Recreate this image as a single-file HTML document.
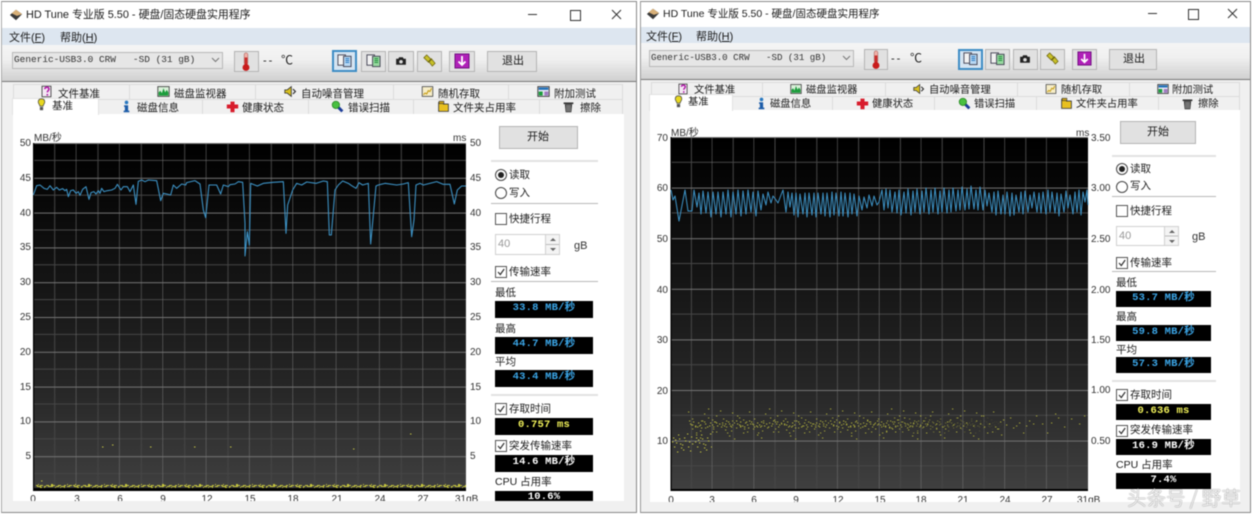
<!DOCTYPE html>
<html lang="zh"><head><meta charset="utf-8"><title>HD Tune</title>
<style>
html,body{margin:0;padding:0;background:#fff;width:1254px;height:514px;overflow:hidden}
#r{position:absolute;left:0;top:0;width:1254px;height:514px;overflow:hidden;filter:blur(.4px);font-family:"Liberation Sans","Noto Sans CJK SC",sans-serif;color:#1c1c1c;font-size:10.5px}
#r div,#r span.t,#r svg.i{position:absolute}
.t{position:absolute;white-space:nowrap;line-height:14px;height:14px}
.a{font-size:10px;color:#333;text-align:right;width:20px;margin-top:1px}
.a2{font-size:10px;color:#333;text-align:left;width:30px;margin:1px 0 0 1px}
.x{font-size:10px;color:#333;text-align:center;width:24px;margin-top:2px}
.btn{background:#e1e1e1;border:1px solid #b4b4b4;box-sizing:border-box}
.sel{background:#d5e4f2;border:2px solid #3d8cc4;box-sizing:border-box}
.box{background:#000;text-align:center;font:bold 10.500px/15px "Liberation Mono","Noto Sans CJK SC",monospace;letter-spacing:.2px;white-space:nowrap;overflow:hidden}
.sep{height:1px;background:#b8b8b8}
.sp{background:#e2e2e2;height:2px}
.rd{width:10px;height:10px;border:1px solid #444;border-radius:50%;background:#fff}
.rd.on:after{content:"";position:absolute;left:2px;top:2px;width:6px;height:6px;border-radius:50%;background:#222}
.cb{width:10px;height:10px;border:1px solid #555;background:#fff}
.cb svg{position:absolute;left:0;top:0;width:10px;height:10px}
.tb{background:#f0f0f0;border-top:1px solid #dcdcdc;border-right:1px solid #dcdcdc;box-sizing:border-box}
.cm{font-family:"Liberation Mono",monospace;color:#333;white-space:pre}
u{text-decoration:underline}
</style></head><body>
<div id="r">
<svg width="0" height="0" style="position:absolute">
<defs>
<symbol id="app" viewBox="0 0 16 16"><path d="M8 2 15 7 8 14 1 8Z" fill="#3a3a3a"/><path d="M8 2 15 7 9 9 3 6Z" fill="#d8b078"/></symbol>
<symbol id="fb" viewBox="0 0 16 16"><rect x="2.5" y="1.5" width="11" height="13" fill="#f4e8f4" stroke="#333"/><path d="M6 5c0-3 5-3 5 0 0 2-2 2-2 4M9 11v2" fill="none" stroke="#b01ca8" stroke-width="2"/></symbol>
<symbol id="mon" viewBox="0 0 16 16"><rect x="1" y="2" width="14" height="12" fill="#d8f0d8" stroke="#333"/><path d="M2 13V9l2-2 2 3 2-6 2 5 2-3 2 3v4Z" fill="#1c9c3c"/></symbol>
<symbol id="spk" viewBox="0 0 16 16"><path d="M1 6h3l5-4v12l-5-4H1Z" fill="#d8c020" stroke="#333"/><path d="M11 5l3 3-3 3" fill="none" stroke="#333" stroke-width="1.5"/></symbol>
<symbol id="rnd" viewBox="0 0 16 16"><rect x="1.5" y="2" width="13" height="12" fill="#f6edc8" stroke="#444"/><path d="M3 12l2-2 2 1 2-4 2 1 2-4" fill="none" stroke="#c8a020" stroke-width="1.4"/></symbol>
<symbol id="ext" viewBox="0 0 16 16"><rect x="1" y="2" width="14" height="12" fill="#e8e8f4" stroke="#222"/><rect x="2" y="3" width="12" height="3" fill="#2070b8"/><rect x="2" y="8" width="5" height="5" fill="#1c9c3c"/><rect x="9" y="8" width="5" height="5" fill="#a07cc0"/></symbol>
<symbol id="blb" viewBox="0 0 16 16"><path d="M8 1c-3 0-4 2-4 4 0 2 2 3 2 5h4c0-2 2-3 2-5 0-2-1-4-4-4Z" fill="#e8d820" stroke="#554"/><rect x="6" y="11" width="4" height="4" fill="#555"/></symbol>
<symbol id="inf" viewBox="0 0 16 16"><circle cx="8" cy="3" r="2.2" fill="#2878c0"/><path d="M5 6.500h5v6.500h1.500v2h-7v-2H6v-4.500H5Z" fill="#1c5ca8"/></symbol>
<symbol id="crs" viewBox="0 0 16 16"><path d="M5.500 2h5v3.500H15v5h-4.500V15h-5v-4.500H1v-5h4.500Z" fill="#d81c2c"/></symbol>
<symbol id="mag" viewBox="0 0 16 16"><path d="M9 9l5 5" stroke="#1c3c98" stroke-width="3.500"/><circle cx="6" cy="6" r="4.500" fill="#48c040" stroke="#2c8828"/></symbol>
<symbol id="fld" viewBox="0 0 16 16"><path d="M2 3h5l1 2h6v9H2Z" fill="#e8c020" stroke="#333"/><rect x="2.500" y="1.500" width="6" height="3" fill="#c8a018" stroke="#333" stroke-width=".7"/></symbol>
<symbol id="trs" viewBox="0 0 16 16"><path d="M2 3h12v2H2Z" fill="#333"/><path d="M3.500 5h9l-1 10h-7Z" fill="#3a3a3a"/><path d="M6 6v8M8 6v8M10 6v8" stroke="#aaa"/></symbol>
<symbol id="th" viewBox="0 0 16 22"><rect x="6" y="1" width="4" height="13" rx="2" fill="#f0b0a8" stroke="#a86058" stroke-width=".6"/><rect x="6.500" y="6" width="3" height="9" fill="#c82828"/><circle cx="8" cy="17" r="3.800" fill="#c81c1c"/></symbol>
<symbol id="d1" viewBox="0 0 16 16"><rect x="1" y="2" width="8" height="11" fill="#f2f2f2" stroke="#445"/><rect x="7" y="3.500" width="8" height="11" fill="#b8d8f4" stroke="#445"/><path d="M9 6h4M9 8h4M9 10h4" stroke="#2878c0"/></symbol>
<symbol id="d2" viewBox="0 0 16 16"><rect x="1" y="2" width="8" height="11" fill="#f2f2f2" stroke="#445"/><rect x="7" y="3.500" width="8" height="11" fill="#98d8a0" stroke="#445"/><path d="M9 6h4M9 8h4M9 10h4" stroke="#1c8c38"/></symbol>
<symbol id="cam" viewBox="0 0 16 16"><path d="M1.500 5h3l1-2h5l1 2h3v8h-13Z" fill="#222"/><circle cx="8" cy="9" r="2.400" fill="#ddd"/></symbol>
<symbol id="chn" viewBox="0 0 16 16"><path d="M2 5 5 2l5 5-3 3Z M7 9l3-3 4 5-3 3Z" fill="#c8c028" stroke="#6c6410" stroke-width=".8"/></symbol>
<symbol id="pur" viewBox="0 0 16 16"><rect x="1" y="1" width="14" height="14" fill="#b020b8" stroke="#701080"/><path d="M8 3v9M4.500 8.500 8 12l3.500-3.500" fill="none" stroke="#fff" stroke-width="1.800"/></symbol>
<symbol id="chk" viewBox="0 0 10 10"><path d="M2 5l2.300 2.500L8.200 2" fill="none" stroke="#333" stroke-width="1.200"/></symbol>
<linearGradient id="cg" x1="0" y1="0" x2="0" y2="1"><stop offset="0" stop-color="#000"/><stop offset=".12" stop-color="#060606"/><stop offset=".4" stop-color="#151515"/><stop offset=".7" stop-color="#262626"/><stop offset="1" stop-color="#404040"/></linearGradient>
<pattern id="gl" x="33" y="143" width="43.333" height="34.800" patternUnits="userSpaceOnUse"><path d="M21.670 0V35M0 17.400H44" stroke="#464646" stroke-width="1"/><path d="M43.333 0V35M0 .500H44" stroke="#747474" stroke-width="1"/></pattern>
<pattern id="gr" x="670.500" y="137" width="41.800" height="50.600" patternUnits="userSpaceOnUse"><path d="M20.900 0V51M0 25.300H42" stroke="#464646" stroke-width="1"/><path d="M41.800 0V51M0 .500H42" stroke="#747474" stroke-width="1"/></pattern>
<pattern id="y1" x="36" y="483" width="37" height="6" patternUnits="userSpaceOnUse"><path d="M0 2.500h2M4 2.500h3M10 2.500h3M15 2.500h4M22 2.500h3M28 2.500h2M33 2.500h3M1 3.500h4M8 3.500h2M12 3.500h5M20 3.500h3M25 3.500h4M31 3.500h3M2 1.500h1M8 4.500h1M15 1.500h2M24 4.500h1M31 1.500h1M4 4.500h2M19 4.500h1M28 4.500h1" stroke="#c8c83c" stroke-width="1" fill="none"/></pattern>
<pattern id="y2" x="688" y="412" width="47" height="26" patternUnits="userSpaceOnUse"><path d="M2 12h1.300M5 10h1.300M7 14h1.300M10 11h1.300M12 13h1.300M14 9h1.300M17 12h1.300M19 15h1.300M22 11h1.300M24 13h1.300M26 10h1.300M29 14h1.300M31 12h1.300M34 11h1.300M36 14h1.300M38 9h1.300M41 12h1.300M44 13h1.300M46 11h1M4 13h1.300M9 15h1.300M16 10h1.300M21 14h1.300M28 11h1.300M33 15h1.300M40 10h1.300M43 15h1.300M1 9h1.300M13 16h1.300M25 15h1.300M37 12h1.300" stroke="#c8c83e" stroke-width="1.100" fill="none"/></pattern>
<pattern id="y6" x="690" y="417" width="31" height="18" patternUnits="userSpaceOnUse"><path d="M1 8h1.300M5 10h1.300M9 9h1.300M11 4h1.300M15 11h1.300M19 9h1.300M23 12h1.300M25 5h1.300M29 7h1.300M2 2h1.300M10 14h1.300M18 1h1.300M26 15h1.300M6 16h1.300M22 3h1.300" stroke="#b8b83a" stroke-width="1.100" fill="none"/></pattern>
<pattern id="y3" x="685" y="408" width="61" height="34" patternUnits="userSpaceOnUse"><path d="M3 4h1.300M11 27h1.300M19 6h1.300M27 24h1.300M35 3h1.300M44 28h1.300M52 8h1.300M58 25h1.300M7 21h1.300M23 1h1.300M40 22h1.300M49 31h1.300M15 30h1.300M31 8h1.300M55 19h1.300M47 5h1.300" stroke="#a8a838" stroke-width="1.100" fill="none"/></pattern>
<pattern id="y4" x="671" y="432" width="23" height="24" patternUnits="userSpaceOnUse"><path d="M2 6h1.300M5 11h1.300M8 7h1.300M11 13h1.300M14 9h1.300M17 15h1.300M20 5h1.300M3 15h1.300M7 3h1.300M12 18h1.300M16 2h1.300M21 12h1.300M1 10h1.300M9 12h1.300M19 19h1.300M6 20h1.300M4 8h1.300M13 6h1.300M18 10h1.300M10 16h1.300" stroke="#c8c83e" stroke-width="1.100" fill="none"/></pattern>
<pattern id="y5" x="880" y="412" width="53" height="28" patternUnits="userSpaceOnUse"><path d="M3 12h1.300M9 15h1.300M14 10h1.300M20 13h1.300M27 16h1.300M33 11h1.300M40 14h1.300M47 12h1.300M6 20h1.300M24 6h1.300M37 21h1.300M50 4h1.300M12 17h1.300M30 14h1.300M43 9h1.300M17 8h1.300" stroke="#a8a838" stroke-width="1.100" fill="none"/></pattern>
<linearGradient id="fadeA" gradientUnits="userSpaceOnUse" x1="688" y1="0" x2="1010" y2="0"><stop offset="0" stop-color="#fff" stop-opacity=".85"/><stop offset=".6" stop-color="#fff" stop-opacity=".8"/><stop offset="1" stop-color="#fff" stop-opacity="0"/></linearGradient>
<mask id="fm" maskUnits="userSpaceOnUse" x="680" y="400" width="340" height="50"><rect x="680" y="400" width="340" height="50" fill="url(#fadeA)"/></mask>
</defs></svg>

<!-- LEFT WINDOW CHROME -->
<div style="left:1px;top:1px;width:636px;height:512px;background:#f0f0f0;border:1px solid #8a8a8a;border-left-color:#aaa;box-sizing:border-box"></div>
<div style="left:2px;top:2px;width:634px;height:26px;background:#fff"></div>
<div style="left:2px;top:28px;width:634px;height:17px;background:#dde6f0"></div>
<div style="left:2px;top:45px;width:634px;height:36px;background:linear-gradient(#f5f5f5,#f0f0f0 40%,#d0d0d0)"></div>
<div style="left:2px;top:81px;width:634px;height:1px;background:#777"></div>
<!-- RIGHT WINDOW CHROME -->
<div style="left:640px;top:1px;width:611px;height:512px;background:#f0f0f0;border:1px solid #8a8a8a;border-left-color:#999;box-sizing:border-box"></div>
<div style="left:641px;top:2px;width:609px;height:25px;background:#fff"></div>
<div style="left:641px;top:27px;width:609px;height:16px;background:#dde6f0"></div>
<div style="left:641px;top:43px;width:609px;height:36px;background:linear-gradient(#f5f5f5,#f0f0f0 40%,#d0d0d0)"></div>
<div style="left:641px;top:79px;width:609px;height:1px;background:#777"></div>

<!-- LEFT title -->
<svg class="i" style="left:9px;top:8px" width="14" height="14"><use href="#app"/></svg>
<span class="t" style="left:26px;top:8px;font-size:10.900px">HD Tune 专业版 5.50 - 硬盘/固态硬盘实用程序</span>
<span class="t" style="left:9px;top:31px;font-size:11px">文件(<u>F</u>)</span>
<span class="t" style="left:60px;top:31px;font-size:11px">帮助(<u>H</u>)</span>
<div style="left:528px;top:14px;width:9px;height:1px;background:#333"></div>
<div style="left:570px;top:10px;width:9px;height:9px;border:1px solid #333"></div>
<svg class="i" style="left:611px;top:9px" width="11" height="11"><path d="M1 1 10 10M10 1 1 10" stroke="#333"/></svg>
<!-- LEFT toolbar -->
<div style="left:12px;top:52px;width:211px;height:17px;background:#e6e6e6;border:1px solid #b8b8b8;box-sizing:border-box"></div>
<span class="t cm" style="left:14px;top:53px;font-size:9.450px">Generic-USB3.0 CRW   -SD (31 gB)</span>
<svg class="i" style="left:211px;top:57px" width="9" height="6"><path d="M1 1 4.500 4.500 8 1" fill="none" stroke="#777"/></svg>
<div class="btn" style="left:234px;top:51px;width:25px;height:21px"></div><svg class="i" style="left:238px;top:52px" width="16" height="20"><use href="#th"/></svg>
<span class="t" style="left:263px;top:54px;font-size:11px;letter-spacing:2px">--</span><span class="t" style="left:281px;top:53px;font-size:12px">℃</span>
<div class="sel" style="left:332px;top:50px;width:25px;height:22px"></div><svg class="i" style="left:337px;top:53px" width="15" height="15"><use href="#d1"/></svg>
<div class="btn" style="left:361px;top:51px;width:25px;height:21px"></div><svg class="i" style="left:366px;top:53px" width="15" height="15"><use href="#d2"/></svg>
<div class="btn" style="left:388px;top:51px;width:26px;height:21px"></div><svg class="i" style="left:395px;top:55px" width="12" height="12"><use href="#cam"/></svg>
<div class="btn" style="left:417px;top:51px;width:25px;height:21px"></div><svg class="i" style="left:422px;top:53px" width="15" height="15"><use href="#chn"/></svg>
<div class="btn" style="left:449px;top:51px;width:26px;height:21px"></div><svg class="i" style="left:454px;top:53px" width="16" height="16"><use href="#pur"/></svg>
<div class="btn" style="left:487px;top:51px;width:50px;height:21px"></div><span class="t" style="left:502px;top:54px;font-size:11px">退出</span>

<!-- LEFT tabs -->
<div class="tb" style="left:13px;top:84px;width:117px;height:15px;border-left:1px solid #dcdcdc"></div>
<div class="tb" style="left:130px;top:84px;width:126px;height:15px"></div>
<div class="tb" style="left:256px;top:84px;width:138px;height:15px"></div>
<div class="tb" style="left:394px;top:84px;width:115px;height:15px"></div>
<div class="tb" style="left:509px;top:84px;width:114px;height:15px"></div>
<div class="tb" style="left:99px;top:99px;width:104px;height:15px"></div>
<div class="tb" style="left:203px;top:99px;width:106px;height:15px"></div>
<div class="tb" style="left:309px;top:99px;width:105px;height:15px"></div>
<div class="tb" style="left:414px;top:99px;width:126px;height:15px"></div>
<div class="tb" style="left:540px;top:99px;width:83px;height:15px"></div>
<div style="left:13px;top:114px;width:611px;height:387px;background:#fff"></div>
<div style="left:12px;top:98px;width:87px;height:17px;background:#fff;border:1px solid #e2e2e2;border-bottom:0;box-sizing:border-box"></div>
<svg class="i" style="left:40px;top:85px" width="13" height="13"><use href="#fb"/></svg><span class="t" style="left:58px;top:87px">文件基准</span>
<svg class="i" style="left:157px;top:85px" width="13" height="13"><use href="#mon"/></svg><span class="t" style="left:174px;top:87px">磁盘监视器</span>
<svg class="i" style="left:284px;top:85px" width="13" height="13"><use href="#spk"/></svg><span class="t" style="left:301px;top:87px">自动噪音管理</span>
<svg class="i" style="left:421px;top:85px" width="13" height="13"><use href="#rnd"/></svg><span class="t" style="left:438px;top:87px">随机存取</span>
<svg class="i" style="left:537px;top:85px" width="13" height="13"><use href="#ext"/></svg><span class="t" style="left:554px;top:87px">附加测试</span>
<svg class="i" style="left:35px;top:98px" width="13" height="13"><use href="#blb"/></svg><span class="t" style="left:52px;top:99px">基准</span>
<svg class="i" style="left:120px;top:100px" width="13" height="13"><use href="#inf"/></svg><span class="t" style="left:137px;top:101px">磁盘信息</span>
<svg class="i" style="left:226px;top:100px" width="13" height="13"><use href="#crs"/></svg><span class="t" style="left:242px;top:101px">健康状态</span>
<svg class="i" style="left:331px;top:100px" width="13" height="13"><use href="#mag"/></svg><span class="t" style="left:348px;top:101px">错误扫描</span>
<svg class="i" style="left:437px;top:100px" width="13" height="13"><use href="#fld"/></svg><span class="t" style="left:453px;top:101px">文件夹占用率</span>
<svg class="i" style="left:562px;top:100px" width="13" height="13"><use href="#trs"/></svg><span class="t" style="left:580px;top:101px">擦除</span>

<!-- RIGHT title -->
<svg class="i" style="left:646px;top:7px" width="14" height="14"><use href="#app"/></svg>
<span class="t" style="left:663px;top:7px;font-size:10.500px">HD Tune 专业版 5.50 - 硬盘/固态硬盘实用程序</span>
<span class="t" style="left:646px;top:30px;font-size:11px">文件(<u>F</u>)</span>
<span class="t" style="left:696px;top:30px;font-size:11px">帮助(<u>H</u>)</span>
<div style="left:1148px;top:13px;width:9px;height:1px;background:#333"></div>
<div style="left:1188px;top:9px;width:9px;height:9px;border:1px solid #333"></div>
<svg class="i" style="left:1227px;top:8px" width="11" height="11"><path d="M1 1 10 10M10 1 1 10" stroke="#333"/></svg>
<!-- RIGHT toolbar -->
<div style="left:649px;top:50px;width:205px;height:17px;background:#e6e6e6;border:1px solid #b8b8b8;box-sizing:border-box"></div>
<span class="t cm" style="left:651px;top:51px;font-size:9.150px">Generic-USB3.0 CRW   -SD (31 gB)</span>
<svg class="i" style="left:842px;top:55px" width="9" height="6"><path d="M1 1 4.500 4.500 8 1" fill="none" stroke="#777"/></svg>
<div class="btn" style="left:864px;top:49px;width:24px;height:21px"></div><svg class="i" style="left:868px;top:50px" width="16" height="20"><use href="#th"/></svg>
<span class="t" style="left:891px;top:52px;font-size:11px;letter-spacing:2px">--</span><span class="t" style="left:910px;top:51px;font-size:12px">℃</span>
<div class="sel" style="left:958px;top:49px;width:25px;height:21px"></div><svg class="i" style="left:963px;top:51px" width="15" height="15"><use href="#d1"/></svg>
<div class="btn" style="left:985px;top:49px;width:25px;height:21px"></div><svg class="i" style="left:990px;top:51px" width="15" height="15"><use href="#d2"/></svg>
<div class="btn" style="left:1013px;top:49px;width:25px;height:21px"></div><svg class="i" style="left:1019px;top:53px" width="12" height="12"><use href="#cam"/></svg>
<div class="btn" style="left:1040px;top:49px;width:25px;height:21px"></div><svg class="i" style="left:1045px;top:51px" width="15" height="15"><use href="#chn"/></svg>
<div class="btn" style="left:1072px;top:49px;width:25px;height:21px"></div><svg class="i" style="left:1077px;top:51px" width="15" height="15"><use href="#pur"/></svg>
<div class="btn" style="left:1109px;top:49px;width:48px;height:21px"></div><span class="t" style="left:1123px;top:52px;font-size:11px">退出</span>

<!-- RIGHT tabs -->
<div class="tb" style="left:651px;top:82px;width:112px;height:14px;border-left:1px solid #dcdcdc"></div>
<div class="tb" style="left:763px;top:82px;width:123px;height:14px"></div>
<div class="tb" style="left:886px;top:82px;width:132px;height:14px"></div>
<div class="tb" style="left:1018px;top:82px;width:112px;height:14px"></div>
<div class="tb" style="left:1130px;top:82px;width:110px;height:14px"></div>
<div class="tb" style="left:733px;top:96px;width:100px;height:14px"></div>
<div class="tb" style="left:833px;top:96px;width:102px;height:14px"></div>
<div class="tb" style="left:935px;top:96px;width:102px;height:14px"></div>
<div class="tb" style="left:1037px;top:96px;width:122px;height:14px"></div>
<div class="tb" style="left:1159px;top:96px;width:81px;height:14px"></div>
<div style="left:650px;top:110px;width:590px;height:392px;background:#fff"></div>
<div style="left:649px;top:94px;width:84px;height:17px;background:#fff;border:1px solid #e2e2e2;border-bottom:0;box-sizing:border-box"></div>
<svg class="i" style="left:677px;top:83px" width="12" height="12"><use href="#fb"/></svg><span class="t" style="left:694px;top:84px;font-size:10.300px">文件基准</span>
<svg class="i" style="left:790px;top:83px" width="12" height="12"><use href="#mon"/></svg><span class="t" style="left:806px;top:84px;font-size:10.300px">磁盘监视器</span>
<svg class="i" style="left:913px;top:83px" width="12" height="12"><use href="#spk"/></svg><span class="t" style="left:929px;top:84px;font-size:10.300px">自动噪音管理</span>
<svg class="i" style="left:1045px;top:83px" width="12" height="12"><use href="#rnd"/></svg><span class="t" style="left:1061px;top:84px;font-size:10.300px">随机存取</span>
<svg class="i" style="left:1157px;top:83px" width="12" height="12"><use href="#ext"/></svg><span class="t" style="left:1172px;top:84px;font-size:10.300px">附加测试</span>
<svg class="i" style="left:672px;top:95px" width="13" height="13"><use href="#blb"/></svg><span class="t" style="left:688px;top:96px;font-size:10.300px">基准</span>
<svg class="i" style="left:755px;top:97px" width="13" height="13"><use href="#inf"/></svg><span class="t" style="left:770px;top:98px;font-size:10.300px">磁盘信息</span>
<svg class="i" style="left:856px;top:97px" width="13" height="13"><use href="#crs"/></svg><span class="t" style="left:872px;top:98px;font-size:10.300px">健康状态</span>
<svg class="i" style="left:958px;top:97px" width="13" height="13"><use href="#mag"/></svg><span class="t" style="left:974px;top:98px;font-size:10.300px">错误扫描</span>
<svg class="i" style="left:1060px;top:97px" width="13" height="13"><use href="#fld"/></svg><span class="t" style="left:1076px;top:98px;font-size:10.300px">文件夹占用率</span>
<svg class="i" style="left:1181px;top:97px" width="13" height="13"><use href="#trs"/></svg><span class="t" style="left:1198px;top:98px;font-size:10.300px">擦除</span>

<!-- CHARTS -->
<svg class="i" style="left:0;top:0" width="1254" height="514">
<rect x="33" y="143" width="433" height="348" fill="url(#cg)"/>
<rect x="33" y="143" width="433" height="348" fill="url(#gl)"/>
<rect x="33" y="488" width="433" height="3" fill="#000"/>
<rect x="33" y="143" width="1.200" height="348" fill="#000"/>
<rect x="36" y="483" width="430" height="5" fill="url(#y1)"/>
<path d="M102 447h1.500M112 445h1.500M150 447h1.500M194 447h1.500M230 447h1.500M353 449h1.500M410 434h1.500M41 481h1.500" stroke="#c0c044"/>
<polyline transform="translate(20 170) scale(.33333)" fill="none" stroke="#3d93c6" stroke-width="3.200" stroke-linejoin="round" points="40,75 50,47 60,45 72,55 82,58 90,47 100,60 110,52 118,60 128,56 135,62 140,58 145,80 152,62 160,60 168,70 175,65 180,76 188,58 198,50 207,88 213,68 222,65 228,72 235,62 240,70 245,55 252,65 262,62 275,60 285,55 292,43 303,60 310,50 322,50 330,65 340,45 348,103 355,34 365,30 375,35 385,30 410,32 422,92 430,70 440,72 452,75 460,45 470,55 485,42 497,45 500,38 525,32 540,42 550,120 557,143 567,45 590,45 602,72 610,45 625,50 630,44 645,42 655,35 668,37 675,160 675,258 682,185 688,225 692,40 712,48 730,40 760,37 790,35 795,130 798,190 803,105 818,60 830,40 845,45 860,36 888,40 910,33 922,35 928,195 934,195 945,60 955,45 968,33 985,40 995,47 1008,55 1017,38 1028,45 1045,40 1052,222 1068,48 1075,45 1095,40 1130,45 1150,42 1165,38 1175,200 1182,150 1188,45 1200,40 1210,45 1250,35 1270,43 1290,43 1303,102 1312,60 1325,48 1338,48"/>

<rect x="670.500" y="137" width="417.500" height="354" fill="url(#cg)"/>
<rect x="670.500" y="137" width="417.500" height="354" fill="url(#gr)"/>
<rect x="670.500" y="489" width="417.500" height="2" fill="#000"/>
<rect x="670.500" y="137" width="1.200" height="354" fill="#000"/>
<rect x="671" y="432" width="41" height="24" fill="url(#y4)"/>
<g mask="url(#fm)">
<rect x="688" y="412" width="322" height="26" fill="url(#y2)"/>
<rect x="690" y="417" width="320" height="18" fill="url(#y6)"/>
</g>
<rect x="685" y="408" width="320" height="34" fill="url(#y3)"/>
<rect x="880" y="412" width="165" height="28" fill="url(#y5)"/>
<path d="M1051 423h1.300M1058 418h1.300M1064 427h1.300M1071 419h1.300M1079 424h1.300M1047 433h1.300M1084 416h1.300M1055 414h1.300" stroke="#a8a838"/>
<polyline fill="none" stroke="#3d93c6" stroke-width="1" stroke-linejoin="round" points="671,190 673,200 675,196 679,221 685,190 688,211 692,211 694,190 697,207 699,193 701,214 703,191 706,213 708,192 711,217 713,192 716,214 718,192 721,217 723,192 726,214 728,190 731,217 733,192 736,214 738,190 741,216 743,191 746,214 748,190 751,212 753,192 756,216 758,191 761,210 763,194 766,205 768,192 771,203 773,196 776,200 778,203 781,195 783,190 786,212 788,192 790,207 792,193 794,215 796,193 798,217 800,194 803,214 805,193 807,217 809,193 812,215 814,193 816,217 818,193 821,214 823,193 825,216 827,193 830,217 832,192 834,215 836,193 839,216 841,192 843,216 845,193 848,217 850,193 852,214 854,194 857,216 859,196 862,210 864,197 867,208 869,195 872,206 874,196 877,205 879,202 882,190 884,210 886,189 888,208 890,190 892,212 895,192 897,213 899,190 901,215 904,192 906,213 908,189 911,215 913,191 915,212 917,189 920,214 922,191 924,212 926,188 929,214 931,190 933,212 935,188 938,214 940,191 942,212 944,188 947,213 949,190 951,212 953,188 956,211 958,190 960,210 962,187 965,210 967,189 969,209 971,186 974,209 976,190 978,210 980,187 983,210 985,190 987,206 989,193 992,212 994,192 996,215 998,191 1001,214 1003,195 1005,214 1007,192 1010,216 1012,193 1014,215 1016,195 1019,212 1021,192 1023,214 1025,191 1028,212 1030,195 1032,208 1034,192 1037,212 1039,193 1041,213 1043,192 1046,214 1048,190 1050,212 1052,192 1055,213 1057,193 1059,216 1061,194 1064,212 1066,191 1068,208 1070,195 1073,214 1075,192 1077,212 1079,190 1081,215 1083,192 1085,202 1087,190 1088,205"/>
</svg>

<!-- LEFT axes -->
<span class="t a" style="left:11px;top:136px">50</span><span class="t a" style="left:11px;top:171px">45</span><span class="t a" style="left:11px;top:206px">40</span><span class="t a" style="left:11px;top:240px">35</span><span class="t a" style="left:11px;top:275px">30</span><span class="t a" style="left:11px;top:310px">25</span><span class="t a" style="left:11px;top:345px">20</span><span class="t a" style="left:11px;top:380px">15</span><span class="t a" style="left:11px;top:414px">10</span><span class="t a" style="left:11px;top:449px">5</span>
<span class="t a2" style="left:469px;top:136px">50</span><span class="t a2" style="left:469px;top:171px">45</span><span class="t a2" style="left:469px;top:206px">40</span><span class="t a2" style="left:469px;top:240px">35</span><span class="t a2" style="left:469px;top:275px">30</span><span class="t a2" style="left:469px;top:310px">25</span><span class="t a2" style="left:469px;top:345px">20</span><span class="t a2" style="left:469px;top:380px">15</span><span class="t a2" style="left:469px;top:414px">10</span><span class="t a2" style="left:469px;top:449px">5</span>
<span class="t" style="left:34px;top:132px;font-size:10px;color:#333">MB/秒</span><span class="t" style="left:453px;top:132px;font-size:10px;color:#333">ms</span>
<span class="t x" style="left:21px;top:491px">0</span><span class="t x" style="left:65px;top:491px">3</span><span class="t x" style="left:108px;top:491px">6</span><span class="t x" style="left:151px;top:491px">9</span><span class="t x" style="left:195px;top:491px">12</span><span class="t x" style="left:238px;top:491px">15</span><span class="t x" style="left:281px;top:491px">18</span><span class="t x" style="left:325px;top:491px">21</span><span class="t x" style="left:368px;top:491px">24</span><span class="t x" style="left:411px;top:491px">27</span><span class="t" style="left:455px;top:493px;font-size:10px;color:#333">31gB</span>

<!-- LEFT side panel -->
<div class="btn" style="left:499px;top:126px;width:79px;height:23px"></div><span class="t" style="left:527px;top:130px;font-size:11px">开始</span>
<div class="sp" style="left:491px;top:160px;width:107px"></div>
<div class="rd on" style="left:495px;top:169px"></div><span class="t" style="left:509px;top:168px">读取</span>
<div class="rd" style="left:495px;top:187px"></div><span class="t" style="left:509px;top:186px">写入</span>
<div class="sep" style="left:491px;top:203px;width:107px"></div>
<div class="cb" style="left:495px;top:213px"></div><span class="t" style="left:509px;top:212px">快捷行程</span>
<div style="left:495px;top:234px;width:65px;height:21px;border:1px solid #d0d0d0;box-sizing:border-box;background:#fff"></div>
<div style="left:545px;top:234px;width:15px;height:21px;border:1px solid #d0d0d0;box-sizing:border-box;background:linear-gradient(#f4f4f4 48%,#bbb 48%,#bbb 52%,#f4f4f4 52%)"></div>
<svg class="i" style="left:549px;top:237px" width="8" height="16"><path d="M1 4 4 1 7 4ZM1 11 4 14 7 11Z" fill="#666"/></svg>
<span class="t" style="left:498px;top:237px;font-size:11px;color:#999">40</span><span class="t" style="left:574px;top:239px;font-size:11px;color:#333">gB</span>
<div class="cb" style="left:495px;top:266px"><svg><use href="#chk"/></svg></div><span class="t" style="left:509px;top:265px">传输速率</span>
<div class="sep" style="left:491px;top:281px;width:107px"></div>
<span class="t" style="left:495px;top:286px">最低</span><div class="box" style="left:495px;top:301px;width:98px;height:17px;color:#3ba6e8">33.8 MB/秒</div>
<span class="t" style="left:495px;top:322px">最高</span><div class="box" style="left:495px;top:337px;width:98px;height:17px;color:#3ba6e8">44.7 MB/秒</div>
<span class="t" style="left:495px;top:355px">平均</span><div class="box" style="left:495px;top:370px;width:98px;height:17px;color:#3ba6e8">43.4 MB/秒</div>
<div class="sp" style="left:491px;top:394px;width:107px"></div>
<div class="cb" style="left:495px;top:403px"><svg><use href="#chk"/></svg></div><span class="t" style="left:509px;top:402px">存取时间</span>
<div class="box" style="left:495px;top:418px;width:98px;height:17px;color:#f2f25a">0.757 ms</div>
<div class="cb" style="left:495px;top:440px"><svg><use href="#chk"/></svg></div><span class="t" style="left:509px;top:439px">突发传输速率</span>
<div class="box" style="left:495px;top:455px;width:98px;height:17px;color:#fff">14.6 MB/秒</div>
<span class="t" style="left:495px;top:475px;font-size:10.500px">CPU 占用率</span>
<div class="box" style="left:495px;top:491px;width:98px;height:10px;color:#fff;line-height:12px">10.6%</div>

<!-- RIGHT axes -->
<span class="t a" style="left:648px;top:131px">70</span><span class="t a" style="left:648px;top:181px">60</span><span class="t a" style="left:648px;top:232px">50</span><span class="t a" style="left:648px;top:283px">40</span><span class="t a" style="left:648px;top:333px">30</span><span class="t a" style="left:648px;top:384px">20</span><span class="t a" style="left:648px;top:434px">10</span>
<span class="t a2" style="left:1090px;top:131px">3.50</span><span class="t a2" style="left:1090px;top:181px">3.00</span><span class="t a2" style="left:1090px;top:232px">2.50</span><span class="t a2" style="left:1090px;top:283px">2.00</span><span class="t a2" style="left:1090px;top:333px">1.50</span><span class="t a2" style="left:1090px;top:383px">1.00</span><span class="t a2" style="left:1090px;top:434px">0.50</span>
<span class="t" style="left:671px;top:127px;font-size:10px;color:#333">MB/秒</span><span class="t" style="left:1076px;top:127px;font-size:10px;color:#333">ms</span>
<span class="t x" style="left:659px;top:492px">0</span><span class="t x" style="left:700px;top:492px">3</span><span class="t x" style="left:742px;top:492px">6</span><span class="t x" style="left:784px;top:492px">9</span><span class="t x" style="left:826px;top:492px">12</span><span class="t x" style="left:868px;top:492px">15</span><span class="t x" style="left:909px;top:492px">18</span><span class="t x" style="left:951px;top:492px">21</span><span class="t x" style="left:993px;top:492px">24</span><span class="t x" style="left:1035px;top:492px">27</span><span class="t" style="left:1077px;top:494px;font-size:10px;color:#333">31gB</span>

<!-- RIGHT side panel -->
<div class="btn" style="left:1120px;top:121px;width:76px;height:23px"></div><span class="t" style="left:1147px;top:125px;font-size:11px">开始</span>
<div class="sp" style="left:1112px;top:155px;width:104px"></div>
<div class="rd on" style="left:1116px;top:163px"></div><span class="t" style="left:1130px;top:162px">读取</span>
<div class="rd" style="left:1116px;top:181px"></div><span class="t" style="left:1130px;top:179px">写入</span>
<div class="sep" style="left:1112px;top:196px;width:104px"></div>
<div class="cb" style="left:1116px;top:205px"></div><span class="t" style="left:1130px;top:204px">快捷行程</span>
<div style="left:1116px;top:226px;width:63px;height:20px;border:1px solid #d0d0d0;box-sizing:border-box;background:#fff"></div>
<div style="left:1164px;top:226px;width:15px;height:20px;border:1px solid #d0d0d0;box-sizing:border-box;background:linear-gradient(#f4f4f4 48%,#bbb 48%,#bbb 52%,#f4f4f4 52%)"></div>
<svg class="i" style="left:1168px;top:229px" width="8" height="16"><path d="M1 4 4 1 7 4ZM1 11 4 14 7 11Z" fill="#666"/></svg>
<span class="t" style="left:1119px;top:229px;font-size:11px;color:#999">40</span><span class="t" style="left:1192px;top:230px;font-size:11px;color:#333">gB</span>
<div class="cb" style="left:1116px;top:257px"><svg><use href="#chk"/></svg></div><span class="t" style="left:1130px;top:256px">传输速率</span>
<div class="sep" style="left:1112px;top:271px;width:104px"></div>
<span class="t" style="left:1116px;top:276px">最低</span><div class="box" style="left:1116px;top:291px;width:95px;height:16px;color:#3ba6e8">53.7 MB/秒</div>
<span class="t" style="left:1116px;top:310px">最高</span><div class="box" style="left:1116px;top:325px;width:95px;height:16px;color:#3ba6e8">59.8 MB/秒</div>
<span class="t" style="left:1116px;top:343px">平均</span><div class="box" style="left:1116px;top:357px;width:95px;height:16px;color:#3ba6e8">57.3 MB/秒</div>
<div class="sp" style="left:1112px;top:380px;width:104px"></div>
<div class="cb" style="left:1116px;top:389px"><svg><use href="#chk"/></svg></div><span class="t" style="left:1130px;top:388px">存取时间</span>
<div class="box" style="left:1116px;top:404px;width:95px;height:16px;color:#f2f25a">0.636 ms</div>
<div class="cb" style="left:1116px;top:425px"><svg><use href="#chk"/></svg></div><span class="t" style="left:1130px;top:423px">突发传输速率</span>
<div class="box" style="left:1116px;top:439px;width:95px;height:16px;color:#fff">16.9 MB/秒</div>
<span class="t" style="left:1116px;top:458px">CPU 占用率</span>
<div class="box" style="left:1116px;top:473px;width:95px;height:16px;color:#fff">7.4%</div>

<!-- bottom clip strips -->
<div style="left:2px;top:501px;width:634px;height:11px;background:#f0f0f0"></div>
<div style="left:641px;top:502px;width:609px;height:10px;background:#f0f0f0"></div>

<!-- watermark -->
<span class="t" style="left:1127px;top:483px;height:28px;line-height:28px;font-size:19.500px;font-family:'Noto Sans CJK SC',sans-serif;font-weight:300;color:#fff;text-shadow:0 0 1px #666,0 0 1px #888">头条号 / 野草</span>
</div>
</body></html>
